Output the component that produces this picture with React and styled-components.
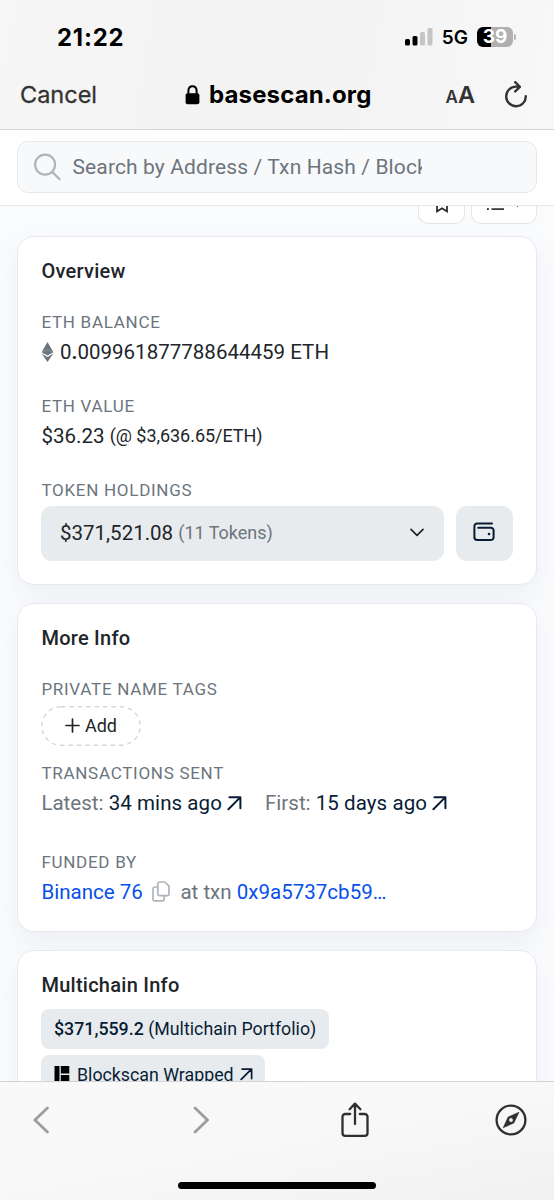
import React from "react";
import styled, { createGlobalStyle } from "styled-components";

const Global = createGlobalStyle`
  * { box-sizing: border-box; }
  body { margin: 0; background: #fff; }
  button, input { font: inherit; }
  svg { display: block; flex: none; }
`;

const Phone = styled.div`
  width: 554px;
  height: 1200px;
  display: flex;
  flex-direction: column;
  overflow: hidden;
  font-family: Roboto, "Liberation Sans", sans-serif;
  color: #212529;
  background: #f9fafc;
`;

const BrowserTop = styled.header`
  height: 130px;
  flex: none;
  border-bottom: 1px solid #d5d5d6;
  background: linear-gradient(100deg, #f6f6f6 0%, #f3f3f3 45%, #f4f4f4 65%, #f8f8f8 100%);
  font-family: Inter, "Liberation Sans", sans-serif;
  color: #000;
`;

const StatusBar = styled.div`
  height: 74px;
  padding: 0 38px 0 57px;
  display: flex;
  align-items: center;
`;

const Clock = styled.span`
  font-size: 23.8px;
  font-weight: 700;
  letter-spacing: 0.85px;
  margin-right: auto;
`;

const Network = styled.span`
  font-size: 19px;
  font-weight: 600;
  letter-spacing: 0;
  margin: 1px 9px 0 9px;
`;

const Battery = styled.span`
  width: 36px;
  height: 20px;
  border-radius: 6px;
  background: linear-gradient(90deg, #000 14px, #b0b0b0 14px);
  color: #fff;
  font-size: 19px;
  line-height: 20px;
  font-weight: 700;
  letter-spacing: 0;
  text-align: center;
`;

const BatteryTip = styled.span`
  width: 2px;
  height: 6px;
  margin-left: 1px;
  border-radius: 0 2px 2px 0;
  background: #b5b5b5;
`;

const AddressBar = styled.div`
  height: 41px;
  padding: 0 26px 0 20px;
  display: flex;
  align-items: center;
`;

const Cancel = styled.span`
  width: 165px;
  font-size: 23.5px;
  letter-spacing: 0;
  color: #333;
  -webkit-text-stroke: 0.3px #333;
`;

const Site = styled.span`
  font-size: 24px;
  font-weight: 700;
  letter-spacing: 0.14px;
  margin-left: 9px;
`;

const TextSize = styled.span`
  margin-left: auto;
  margin-right: 29px;
  font-size: 17px;
  font-weight: 600;
  letter-spacing: 0;
  color: #333;
  display: flex;
  align-items: baseline;
  b { font-size: 23.5px; font-weight: 600; }
`;

const SearchHeader = styled.div`
  height: 76px;
  flex: none;
  padding: 11px 17px 0;
  background: #fff;
  border-bottom: 1px solid #e6e9ec;
`;

const SearchBox = styled.div`
  height: 52px;
  padding: 0 114px 0 16px;
  display: flex;
  align-items: center;
  gap: 10.5px;
  border: 1px solid #e6e9ec;
  border-radius: 11px;
  background: #f8f9fb;
`;

const Placeholder = styled.span`
  flex: 1;
  overflow: hidden;
  white-space: nowrap;
  font-size: 21px;
  letter-spacing: 0.12px;
  line-height: 30px;
  color: #6c757d;
`;

const Page = styled.main`
  flex: 1;
  min-height: 0;
  overflow: hidden;
  padding: 0 17px;
  display: flex;
  flex-direction: column;
  background: #fafbfd;
`;

const Actions = styled.div`
  height: 18px;
  margin-bottom: 12px;
  flex: none;
  display: flex;
  justify-content: flex-end;
  align-items: flex-end;
  gap: 6px;
`;

const ActionButton = styled.div`
  width: ${(p) => p.$width}px;
  height: 18px;
  display: flex;
  justify-content: center;
  border: 1px solid #e3e6ea;
  border-top: 0;
  border-radius: 0 0 10px 10px;
  background: #fff;
`;

const Card = styled.section`
  height: ${(p) => p.$height}px;
  margin-bottom: 18px;
  flex: none;
  padding: 22px 23px;
  border: 1px solid #e7eaed;
  border-radius: 17px;
  background: #fff;
  box-shadow: 0 11px 26px rgba(189, 197, 209, 0.2);
`;

const CardTitle = styled.h2`
  margin: 0 0 ${(p) => p.$gap ?? 27}px;
  padding-left: 0.4px;
  font-size: 20px;
  line-height: 24px;
  font-weight: 500;
  letter-spacing: 0.26px;
`;

const Field = styled.div`
  margin-bottom: ${(p) => p.$gap ?? 27}px;
`;

const Label = styled.div`
  height: 24px;
  margin-bottom: ${(p) => p.$gap ?? 3}px;
  padding-left: 0.4px;
  font-size: 17px;
  line-height: 24px;
  letter-spacing: 0.72px;
  color: #6c757d;
`;

const Value = styled.div`
  height: 30px;
  display: flex;
  align-items: center;
  white-space: pre;
  font-size: 20.5px;
  line-height: 30px;
  letter-spacing: 0.02px;
  padding-left: 0.4px;
`;

const Small = styled.span`
  font-size: 18px;
  letter-spacing: -0.04px;
`;

const Muted = styled.span`
  color: #6c757d;
  font-size: ${(p) => p.$size ?? 20.5}px;
`;

const Dark = styled.span`
  color: #081d35;
  letter-spacing: 0.08px;
`;

const Link = styled.span`
  color: #0650ea;
`;

const Holdings = styled.div`
  display: flex;
  gap: 12px;
`;

const Select = styled.div`
  width: 403px;
  height: 55px;
  padding: 0 20px 2px 19px;
  display: flex;
  align-items: center;
  white-space: pre;
  border-radius: 11px;
  background: #e8ebee;
  font-size: 20.5px;
  svg { margin-left: auto; }
`;

const WalletButton = styled.div`
  width: 57px;
  height: 55px;
  display: grid;
  place-items: center;
  padding: 0 2px 3px 0;
  border-radius: 11px;
  background: #e8ebee;
`;

const AddTag = styled.div`
  width: 100px;
  height: 40px;
  padding-bottom: 2px;
  position: relative;
  display: flex;
  align-items: center;
  justify-content: center;
  gap: 5px;
  font-size: 18px;
`;

const DashedOutline = styled.svg`
  position: absolute;
  inset: 0;
`;

const Badge = styled.div`
  width: ${(p) => p.$width}px;
  height: 40px;
  margin-bottom: 6px;
  padding: 0 13px 2px;
  display: flex;
  align-items: center;
  white-space: pre;
  border-radius: 8px;
  background: #e8ebee;
  color: #081d35;
  font-size: 17.8px;
  b { font-weight: 500; }
`;

const BrowserBottom = styled.footer`
  height: 119px;
  flex: none;
  border-top: 1px solid #d3d3d5;
  background: linear-gradient(170deg, #f9f9f9 0%, #f8f8f8 50%, #f1f1f1 100%);
`;

const Toolbar = styled.nav`
  height: 76px;
  padding: 0 27px 0 33px;
  display: grid;
  grid-template-columns: 159px 149px 1fr auto;
  align-items: center;
`;

const HomeIndicator = styled.div`
  width: 198px;
  height: 7px;
  margin: 24px auto 0 178px;
  border-radius: 4px;
  background: #000;
`;

const Arrow = ({ size = 15, left = 6 }) => (
  <svg width={size} height={size} viewBox="0 0 15 15" fill="none" stroke="#081d35" strokeWidth="2" strokeLinecap="round" strokeLinejoin="round" style={{ marginLeft: left }}>
    <path d="M2.4 1.2H13.4V12.2M13.2 1.4L1.4 13.2" />
  </svg>
);

export default function App() {
  return (
    <Phone>
      <Global />
      <BrowserTop>
        <StatusBar>
          <Clock>21:22</Clock>
          <svg width="28" height="18" viewBox="0 0 28 18">
            <rect x="0" y="11" width="5" height="6.5" rx="1.5" />
            <rect x="7.5" y="8" width="5" height="9.5" rx="1.5" />
            <rect x="15" y="4" width="5" height="13.5" rx="1.5" fill="#c4c4c4" />
            <rect x="22.5" y="0" width="5" height="17.5" rx="1.5" fill="#c4c4c4" />
          </svg>
          <Network>5G</Network>
          <Battery>39</Battery>
          <BatteryTip />
        </StatusBar>
        <AddressBar>
          <Cancel>Cancel</Cancel>
          <svg width="15" height="20" viewBox="0 0 15 20">
            <path d="M3.4 9V5.8C3.4 3 5.1 1.2 7.5 1.2s4.1 1.8 4.1 4.6V9" fill="none" stroke="#000" strokeWidth="2" />
            <rect x="0.6" y="8.3" width="13.8" height="11" rx="2" />
          </svg>
          <Site>basescan.org</Site>
          <TextSize>A<b>A</b></TextSize>
          <svg width="24" height="28" viewBox="0 0 24 28" fill="none" stroke="#333" strokeWidth="2.4" strokeLinecap="round" strokeLinejoin="round">
            <path d="M21.8 15.2A9.8 9.8 0 1 1 12 5.6H15.6M11.2 1.2L15.9 5.8L11.2 10.4" />
          </svg>
        </AddressBar>
      </BrowserTop>

      <SearchHeader>
        <SearchBox>
          <svg width="28" height="28" viewBox="0 0 28 28" fill="none" stroke="#adb5bd" strokeWidth="2.2" strokeLinecap="round">
            <circle cx="11.1" cy="11.6" r="10" />
            <path d="M18.3 18.9L25.6 26.2" />
          </svg>
          <Placeholder>Search by Address / Txn Hash / Block / Token</Placeholder>
        </SearchBox>
      </SearchHeader>

      <Page>
        <Actions>
          <ActionButton $width={47}>
            <svg width="14" height="10" viewBox="0 0 14 10" fill="none" stroke="#212529" strokeWidth="1.7">
              <path d="M2 -2V5.4L7 2.2L12 5.4V-2" />
            </svg>
          </ActionButton>
          <ActionButton $width={66}>
            <svg width="34" height="8" viewBox="0 0 34 8" fill="#212529">
              <rect x="0" y="2.2" width="1.8" height="1.8" />
              <rect x="4.5" y="2.3" width="12.5" height="1.6" />
              <path d="M29.7 0H31.3L30.5 1Z" />
            </svg>
          </ActionButton>
        </Actions>

        <Card $height={349}>
          <CardTitle>Overview</CardTitle>
          <Field>
            <Label>ETH BALANCE</Label>
            <Value>
              <svg width="13" height="20" viewBox="0 0 13 20" style={{ marginRight: 5.5 }}>
                <path d="M6.5 0L12.4 10.2L6.5 13.6L0.6 10.2Z" fill="#6c757d" />
                <path d="M0.6 11.6L6.5 15L12.4 11.6L6.5 20Z" fill="#6c757d" />
                <path d="M1.2 10.2L6.5 7.8L11.8 10.2" fill="none" stroke="#9aa1a8" strokeWidth="0.6" />
              </svg>
              <span>0<b>.</b>009961877788644459 ETH</span>
            </Value>
          </Field>
          <Field>
            <Label>ETH VALUE</Label>
            <Value>$36.23 <Small>(@ $3,636.65/ETH)</Small></Value>
          </Field>
          <Field>
            <Label $gap={4}>TOKEN HOLDINGS</Label>
            <Holdings>
              <Select>
                $371,521.08 <Muted $size={18}>(11 Tokens)</Muted>
                <svg width="14" height="9" viewBox="0 0 14 9" fill="none" stroke="#212529" strokeWidth="1.7" strokeLinecap="round" strokeLinejoin="round">
                  <path d="M1 1.3L7 7.3L13 1.3" />
                </svg>
              </Select>
              <WalletButton>
                <svg width="22" height="20" viewBox="0 0 22 20" fill="none" stroke="#081d35" strokeWidth="2" strokeLinecap="round" strokeLinejoin="round">
                  <path d="M19 1.5H4.2A2.8 2.8 0 0 0 1.4 4.3V15.2A2.8 2.8 0 0 0 4.2 18H17.8A2.8 2.8 0 0 0 20.6 15.2V8.5A2.8 2.8 0 0 0 17.8 5.7H5.2" />
                  <circle cx="16" cy="12" r="1.3" fill="#081d35" stroke="none" />
                </svg>
              </WalletButton>
            </Holdings>
          </Field>
        </Card>

        <Card $height={329}>
          <CardTitle>More Info</CardTitle>
          <Field $gap={15}>
            <Label $gap={5}>PRIVATE NAME TAGS</Label>
            <AddTag>
              <DashedOutline width="100" height="40" viewBox="0 0 100 40" fill="none" stroke="#d3d6da" strokeWidth="1.4" strokeDasharray="4.4 4">
                <rect x="0.8" y="0.8" width="98.4" height="38.4" rx="19.2" />
              </DashedOutline>
              <svg width="15" height="15" viewBox="0 0 15 15" stroke="#212529" strokeWidth="1.7" strokeLinecap="round">
                <path d="M1 7.5H14M7.5 1V14" />
              </svg>
              <span>Add</span>
            </AddTag>
          </Field>
          <Field $gap={32}>
            <Label>TRANSACTIONS SENT</Label>
            <Value>
              <Muted>Latest: </Muted><Dark>34 mins ago</Dark><Arrow left={5} />
              <Muted style={{ marginLeft: 23 }}>First: </Muted><Dark>15 days ago</Dark><Arrow left={5} />
            </Value>
          </Field>
          <Field>
            <Label>FUNDED BY</Label>
            <Value>
              <Link>Binance 76</Link>
              <svg width="18" height="21" viewBox="0 0 18 21" fill="none" stroke="#adb5bd" strokeWidth="1.7" strokeLinejoin="round" style={{ margin: "0 10px 1px 9.5px" }}>
                <path d="M7.6 1H12.8L17 5.2V12.8A1.8 1.8 0 0 1 15.2 14.6H7.6A1.8 1.8 0 0 1 5.8 12.8V2.8A1.8 1.8 0 0 1 7.6 1Z" />
                <path d="M5.6 6H2.8A1.8 1.8 0 0 0 1 7.8V18A1.8 1.8 0 0 0 2.8 19.8H10.4A1.8 1.8 0 0 0 12.2 18V14.8" />
              </svg>
              <Muted>at txn </Muted><Link>0x9a5737cb59…</Link>
            </Value>
          </Field>
        </Card>

        <Card $height={300}>
          <CardTitle $gap={12}>Multichain Info</CardTitle>
          <Badge $width={288}><b>$371,559.2</b> (Multichain Portfolio)</Badge>
          <Badge $width={224}>
            <svg width="16" height="17" viewBox="0 0 16 17" style={{ marginRight: 7 }}>
              <path d="M0.5 0H5.5V17H0.5ZM6.8 0H15.3V7.6H6.8ZM6.8 9H15.3V17H6.8Z" />
            </svg>
            Blockscan Wrapped<Arrow size={13} left={6} />
          </Badge>
        </Card>
      </Page>

      <BrowserBottom>
        <Toolbar>
          <svg width="17" height="28" viewBox="0 0 17 28" fill="none" stroke="#9d9d9d" strokeWidth="2.8" strokeLinecap="round" strokeLinejoin="round">
            <path d="M14.4 2L1.9 14L14.4 26" />
          </svg>
          <svg width="17" height="28" viewBox="0 0 17 28" fill="none" stroke="#9d9d9d" strokeWidth="2.8" strokeLinecap="round" strokeLinejoin="round">
            <path d="M3 2L15.5 14L3 26" />
          </svg>
          <svg width="30" height="36" viewBox="0 0 30 36" fill="none" stroke="#2f2f2f" strokeWidth="2.3" strokeLinecap="round" strokeLinejoin="round">
            <path d="M9.2 12H4.3A2.8 2.8 0 0 0 1.5 14.8V31A2.8 2.8 0 0 0 4.3 33.8H23.7A2.8 2.8 0 0 0 26.5 31V14.8A2.8 2.8 0 0 0 23.7 12H18.8M14 22V2M8.6 7.2L14 1.6L19.4 7.2" />
          </svg>
          <svg width="32" height="32" viewBox="0 0 32 32">
            <circle cx="16" cy="16" r="14.4" fill="none" stroke="#2f2f2f" strokeWidth="2.3" />
            <path fillRule="evenodd" fill="#2f2f2f" stroke="#2f2f2f" strokeWidth="0.6" d="M24 8.2L18.9 18.9L8.2 23.8L13.1 13.1ZM16 13.8A2.2 2.2 0 1 0 16 18.2A2.2 2.2 0 1 0 16 13.8Z" />
          </svg>
        </Toolbar>
        <HomeIndicator />
      </BrowserBottom>
    </Phone>
  );
}
